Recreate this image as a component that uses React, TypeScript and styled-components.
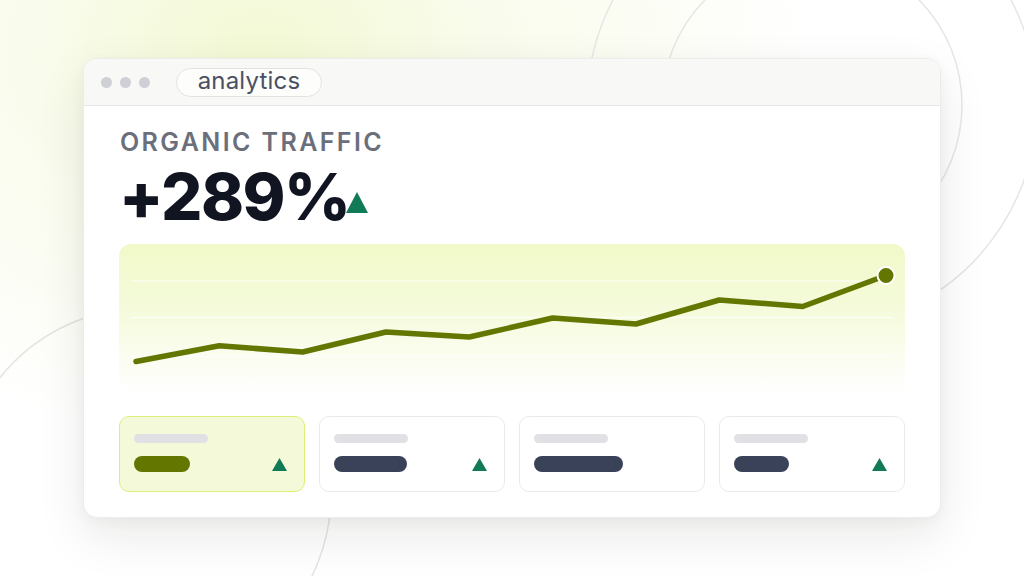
import React from "react";
import styled, { createGlobalStyle } from "styled-components";

const GlobalStyle = createGlobalStyle`
  html, body { margin: 0; padding: 0; }
  body { width: 1024px; height: 576px; overflow: hidden; background: #ffffff; font-family: Inter, "Noto Sans", sans-serif; }
  * { box-sizing: border-box; }
`;

const Page = styled.div`
  position: relative;
  width: 1024px;
  height: 576px;
  overflow: hidden;
  padding: 58px 83px 0 83px;
  background:
    radial-gradient(ellipse 560px 400px at 260px 50px, rgba(242, 249, 210, 0.95) 0%, rgba(245, 250, 225, 0.65) 40%, rgba(255, 255, 255, 0) 100%),
    #ffffff;
`;

const Decor = styled.svg`
  position: absolute;
  left: 0;
  top: 0;
  width: 1024px;
  height: 576px;
  pointer-events: none;
`;

const Window = styled.div`
  position: relative;
  width: 858px;
  height: 460px;
  background: #ffffff;
  border: 1px solid #ececea;
  border-radius: 14px;
  overflow: hidden;
  box-shadow: 0 18px 50px rgba(20, 24, 10, 0.09), 0 4px 14px rgba(20, 24, 10, 0.04);
  display: flex;
  flex-direction: column;
`;

const TitleBar = styled.div`
  height: 47px;
  flex: none;
  background: #f8f8f6;
  border-bottom: 1px solid #e6e6e4;
  display: flex;
  align-items: center;
  padding-left: 17px;
`;

const Dots = styled.div`
  display: flex;
  gap: 8px;
  margin-right: 26px;
`;

const Dot = styled.span`
  width: 11px;
  height: 11px;
  border-radius: 50%;
  background: #cfcfd6;
`;

const Pill = styled.div`
  height: 29px;
  width: 146px;
  border-radius: 15px;
  border: 1px solid #e2e2e2;
  background: #fdfdfc;
  display: flex;
  align-items: center;
  justify-content: center;
  font-size: 24px;
  color: #4b5061;
  letter-spacing: 0.2px;
  padding-bottom: 3px;
`;

const Content = styled.div`
  flex: 1;
  display: flex;
  flex-direction: column;
  padding: 21px 35px 0 35px;
`;

const Label = styled.div`
  font-size: 25px;
  line-height: 30px;
  font-weight: 600;
  letter-spacing: 2.4px;
  color: #6b6f7b;
  padding-left: 1px;
`;

const BigRow = styled.div`
  display: flex;
  align-items: flex-end;
  margin-top: 7px;
  height: 65px;
`;

const BigValue = styled.div`
  font-size: 65px;
  line-height: 65px;
  font-weight: 800;
  letter-spacing: -1.5px;
  color: #111522;
  margin-right: -4px;
`;

const UpMark = styled.svg<{ $w: number; $h: number; $mb: number }>`
  width: ${(p) => p.$w}px;
  height: ${(p) => p.$h}px;
  margin-bottom: ${(p) => p.$mb}px;
  flex: none;
  display: block;
`;

const Chart = styled.div`
  margin-top: 15px;
  height: 150px;
  border-radius: 12px;
  background: linear-gradient(180deg, #f1f9c9 0%, #f5fbdc 45%, #fbfdf0 75%, rgba(255, 255, 255, 1) 100%);
`;

const ChartSvg = styled.svg`
  display: block;
  width: 100%;
  height: 100%;
`;

const Cards = styled.div`
  margin-top: 22px;
  display: grid;
  grid-template-columns: repeat(4, 186px);
  gap: 14px;
`;

const Card = styled.div<{ $active?: boolean }>`
  height: 76px;
  border-radius: 10px;
  border: 1.5px solid ${(p) => (p.$active ? "#dcef78" : "#eaeaea")};
  background: ${(p) => (p.$active ? "#f3f9d9" : "#ffffff")};
  padding: 17px 17px 0 14px;
  display: flex;
  flex-direction: column;
  gap: 13px;
`;

const SkeletonLine = styled.div`
  width: 74px;
  height: 9px;
  border-radius: 5px;
  background: #e0e0e5;
`;

const CardRow = styled.div`
  display: flex;
  align-items: center;
  justify-content: space-between;
  height: 16px;
`;

const ValueBar = styled.div<{ $w: number; $color: string }>`
  width: ${(p) => p.$w}px;
  height: 16px;
  border-radius: 8px;
  background: ${(p) => p.$color};
`;

const Triangle = ({ w, h, mb = 0 }: { w: number; h: number; mb?: number }) => (
  <UpMark $w={w} $h={h} $mb={mb} viewBox={`0 0 ${w} ${h}`}>
    <polygon points={`${w / 2},0 ${w},${h} 0,${h}`} fill="#117a56" />
  </UpMark>
);

const points: [number, number][] = [
  [17, 117.5],
  [100.3, 101.8],
  [183.7, 108],
  [267, 88],
  [350.3, 93],
  [433.7, 74],
  [517, 80],
  [600.3, 56],
  [683.7, 62.5],
  [767, 31.5],
];

const cards = [
  { active: true, w: 56, color: "#637600", up: true },
  { active: false, w: 73, color: "#3a4259", up: true },
  { active: false, w: 89, color: "#3a4259", up: false },
  { active: false, w: 55, color: "#3a4259", up: true },
];

export default function App() {
  const path = points.map((p, i) => `${i === 0 ? "M" : "L"}${p[0]} ${p[1]}`).join(" ");
  const last = points[points.length - 1];
  return (
    <>
      <GlobalStyle />
      <Page>
        <Decor viewBox="0 0 1024 576">
          <circle cx="812" cy="105" r="150" fill="none" stroke="#e6e6e6" strokeWidth="1.5" />
          <circle cx="812" cy="105" r="225" fill="none" stroke="#e6e6e6" strokeWidth="1.5" />
          <circle cx="145" cy="494" r="186" fill="none" stroke="#e4e4e2" strokeWidth="1.5" />
        </Decor>
        <Window>
          <TitleBar>
            <Dots>
              <Dot />
              <Dot />
              <Dot />
            </Dots>
            <Pill>analytics</Pill>
          </TitleBar>
          <Content>
            <Label>ORGANIC TRAFFIC</Label>
            <BigRow>
              <BigValue>+289%</BigValue>
              <Triangle w={22} h={21} mb={16} />
            </BigRow>
            <Chart>
              <ChartSvg viewBox="0 0 786 150" preserveAspectRatio="none">
                <line x1="12" y1="37" x2="774" y2="37" stroke="#ffffff" strokeWidth="1.2" opacity="0.9" />
                <line x1="12" y1="73.5" x2="774" y2="73.5" stroke="#ffffff" strokeWidth="1.2" opacity="0.9" />
                <line x1="12" y1="112.5" x2="774" y2="112.5" stroke="#ffffff" strokeWidth="1.2" opacity="0.9" />
                <path d={path} fill="none" stroke="#637600" strokeWidth="5.5" strokeLinejoin="round" strokeLinecap="round" />
                <circle cx={last[0]} cy={last[1]} r="8.5" fill="#637600" stroke="#ffffff" strokeWidth="2" />
              </ChartSvg>
            </Chart>
            <Cards>
              {cards.map((c, i) => (
                <Card key={i} $active={c.active}>
                  <SkeletonLine />
                  <CardRow>
                    <ValueBar $w={c.w} $color={c.color} />
                    {c.up && <Triangle w={15} h={13} />}
                  </CardRow>
                </Card>
              ))}
            </Cards>
          </Content>
        </Window>
      </Page>
    </>
  );
}
